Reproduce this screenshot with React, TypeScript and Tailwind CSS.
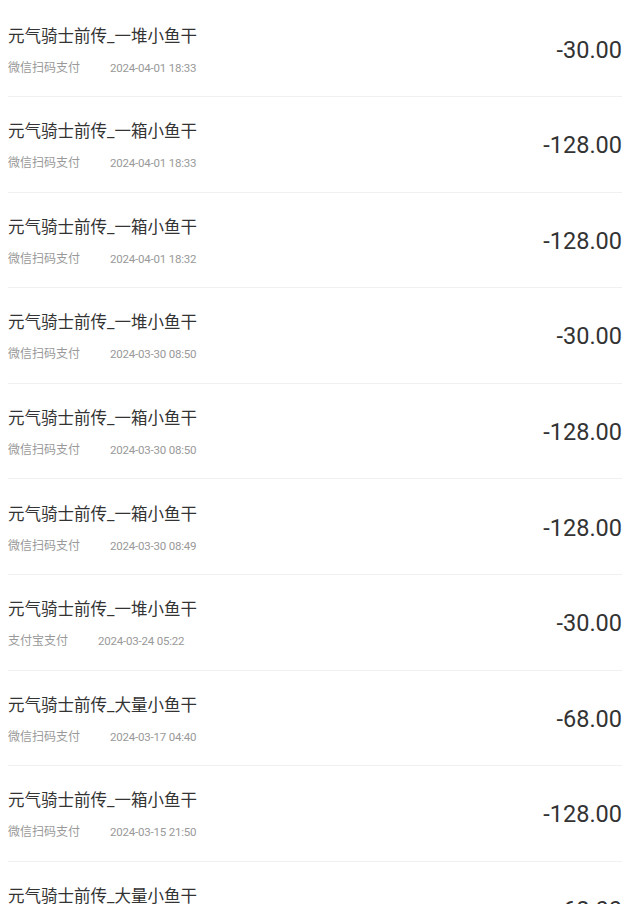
import React from "react";

type Item = { title: string; pay: string; time: string; amount: string };

const items: Item[] = [
  { title: "元气骑士前传_一堆小鱼干", pay: "微信扫码支付", time: "2024-04-01 18:33", amount: "-30.00" },
  { title: "元气骑士前传_一箱小鱼干", pay: "微信扫码支付", time: "2024-04-01 18:33", amount: "-128.00" },
  { title: "元气骑士前传_一箱小鱼干", pay: "微信扫码支付", time: "2024-04-01 18:32", amount: "-128.00" },
  { title: "元气骑士前传_一堆小鱼干", pay: "微信扫码支付", time: "2024-03-30 08:50", amount: "-30.00" },
  { title: "元气骑士前传_一箱小鱼干", pay: "微信扫码支付", time: "2024-03-30 08:50", amount: "-128.00" },
  { title: "元气骑士前传_一箱小鱼干", pay: "微信扫码支付", time: "2024-03-30 08:49", amount: "-128.00" },
  { title: "元气骑士前传_一堆小鱼干", pay: "支付宝支付", time: "2024-03-24 05:22", amount: "-30.00" },
  { title: "元气骑士前传_大量小鱼干", pay: "微信扫码支付", time: "2024-03-17 04:40", amount: "-68.00" },
  { title: "元气骑士前传_一箱小鱼干", pay: "微信扫码支付", time: "2024-03-15 21:50", amount: "-128.00" },
  { title: "元气骑士前传_大量小鱼干", pay: "微信扫码支付", time: "2024-03-15 21:49", amount: "-68.00" },
];

export default function App() {
  return (
    <div
      className="w-[642px] h-[904px] overflow-hidden bg-white pt-[1.4px]"
      style={{ fontFamily: "Roboto, 'Noto Sans CJK SC', sans-serif" }}
    >
      {items.map((it, i) => (
        <div
          key={i}
          className="ml-2 mr-5 h-[95.6px] box-border border-b border-[#f0f0f0] flex items-center justify-between"
        >
          <div className="flex flex-col pt-[3px]">
            <div className="text-[16.5px] leading-[24px] text-[#333333]">{it.title}</div>
            <div className="mt-[11px] flex items-center text-[12px] leading-[16px] text-[#999999]">
              <span>{it.pay}</span>
              <span className="ml-[30px] text-[11.5px] tracking-[-0.2px]">{it.time}</span>
            </div>
          </div>
          <div className="mt-[2px] text-[23.5px] leading-[28px] text-[#333333]">{it.amount}</div>
        </div>
      ))}
    </div>
  );
}
